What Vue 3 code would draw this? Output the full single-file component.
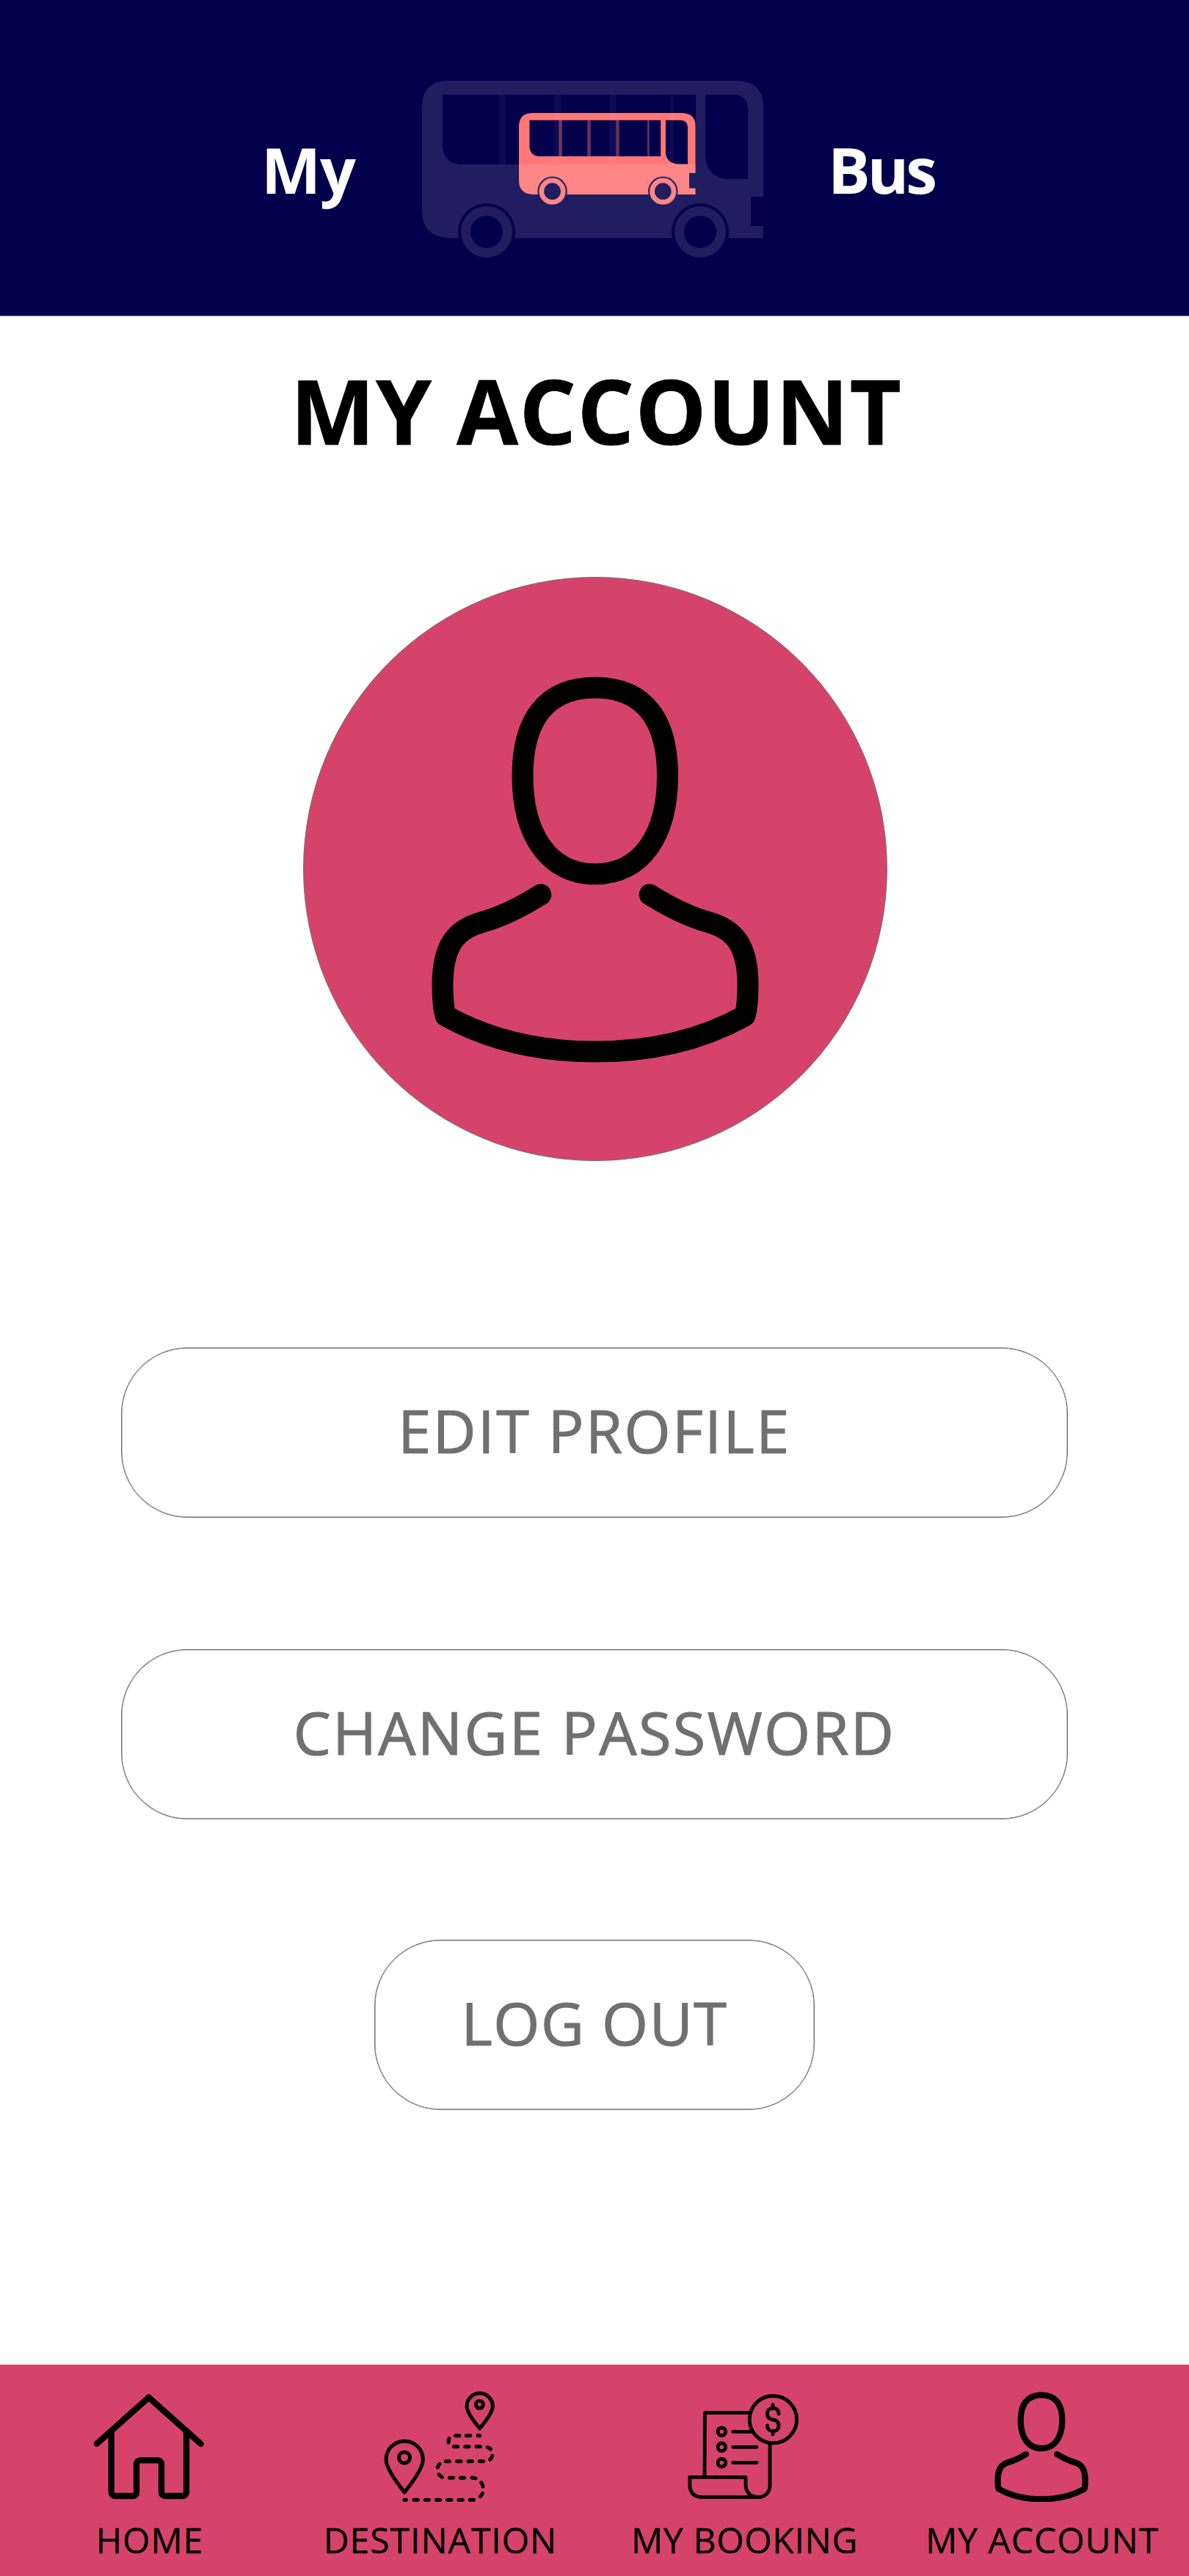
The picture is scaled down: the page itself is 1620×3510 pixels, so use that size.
<script setup>
const actions = [
  { label: 'EDIT PROFILE', cls: 'edit' },
  { label: 'CHANGE PASSWORD', cls: 'change' },
  { label: 'LOG OUT', cls: 'logout' },
]

const personHead =
  'M810 937C880 937 908.5 985 908.5 1057C908.5 1135 875 1191 810 1191C745 1191 711 1135 711 1057C711 985 740 937 810 937Z'
const personBody =
  'M735.8 1219C712 1234 686 1248 656 1256.5C622 1266 602 1286 602 1342C602 1362 603 1373 606 1384C665 1417 735 1433 810 1433C885 1433 955 1417 1014 1384C1017 1373 1018 1362 1018 1342C1018 1286 998 1266 964 1256.5C934 1248 908 1234 884.2 1219'

const routeDashes =
  'M393 621h7M432 621h16M478 621h16M523 621h16M569 621h16M615 621h16M661 621h16M703 607Q710 602 712 594M707 550Q713 557 714 566M669 530Q677 530 684 533M622 531h16M577 531h16M534 517Q540 524 547 528M529 488Q531 480 537 474M562 463h16M608 463h16M654 463h16M700 463h16M743 456Q750 450 752 441M733 406Q741 408 746 414M687 403h16M641 403h16M595 403h16M573 386Q573 376 576 370M602 358h16M646 358h16M693 358h8'
</script>

<template>
  <div class="screen">
    <header class="header">
      <span class="brand">My</span>
      <svg class="buses" viewBox="0 0 465 245">
        <defs>
          <mask id="wheel-gaps" maskUnits="userSpaceOnUse" x="0" y="0" width="465" height="245">
            <rect width="465" height="245" fill="#fff" />
            <circle cx="88" cy="206" r="39" fill="#000" />
            <circle cx="379" cy="206" r="39" fill="#000" />
          </mask>
          <g id="bus">
            <path
              mask="url(#wheel-gaps)"
              fill-rule="evenodd"
              d="M36 0H427Q465 0 465 36V158H448V198H465V214.5H36Q0 212 0 178V36Q0 0 36 0ZM28 19V90Q30 114 56 114H373V19ZM386 19V104Q388 131 416 134H444V40Q444 19 424 19Z"
            />
            <path
              fill-opacity=".4"
              d="M105 19h9v95h-9zM180 19h9v95h-9zM255 19h9v95h-9zM338 19h5v95h-5z"
            />
            <g fill="none" stroke-width="13">
              <circle cx="88" cy="206" r="28.5" />
              <circle cx="379" cy="206" r="28.5" />
            </g>
          </g>
        </defs>
        <use href="#bus" transform="translate(132 44) scale(.518)" fill="#ff7777" stroke="#ff7777" stroke-width="0" />
        <g opacity=".115">
          <use href="#bus" fill="#fff" stroke="#fff" stroke-width="0" />
        </g>
      </svg>
      <span class="brand brand-end">Bus</span>
    </header>

    <main class="content">
      <h1 class="title">MY ACCOUNT</h1>
      <div class="avatar">
        <svg viewBox="587 922 446 526" width="446" height="526" class="line" stroke-width="29">
          <path :d="personHead" />
          <path :d="personBody" />
        </svg>
      </div>
      <button v-for="a in actions" :key="a.label" class="action" :class="a.cls">{{ a.label }}</button>
    </main>

    <nav class="nav">
      <a class="item home">
        <span class="icon">
          <svg viewBox="380 188 455 432" width="151.7" height="144" class="line" stroke-width="25">
            <path d="M395 391L607 202L820 392" />
            <path
              d="M454 340V588Q454 605 471 605H541Q557 605 557 589V475Q557 459 573 459H642Q659 459 659 475V589Q659 605 675 605H743Q761 605 761 586V340"
            />
          </svg>
        </span>
        <span class="label">HOME</span>
      </a>
      <a class="item destination">
        <span class="icon">
          <svg viewBox="309 176 454 454" width="151.3" height="151.3" class="line" stroke-width="15">
            <path d="M701 329C690 315 648 266 648 238A53 53 0 0 1 754 238C754 266 712 315 701 329Z" />
            <circle cx="700.5" cy="231" r="15" />
            <path d="M393.5 590C378 570 318 498 318 456A75.5 75.5 0 0 1 469 456C469 498 409 570 393.5 590Z" />
            <circle cx="393" cy="448" r="22.5" />
            <path :d="routeDashes" />
          </svg>
        </span>
        <span class="label">DESTINATION</span>
      </a>
      <a class="item booking">
        <span class="icon">
          <svg viewBox="350 188 455 431" width="151.7" height="143.7" class="line" stroke-width="14.5">
            <circle cx="699" cy="292" r="96.5" />
            <path d="M605 265H420.500L419 521" />
            <path d="M686 392V562A47 48 0 0 1 639 610H407Q358.500 606 358.500 560V528H587V562Q590 605 635 610" />
            <circle cx="489" cy="342" r="16" />
            <circle cx="489" cy="405" r="16" />
            <circle cx="489" cy="469" r="16" />
            <path d="M535 342H612M535 405H632M535 469H632" />
            <path
              d="M698 232v12M698 342v11M722 269C722 253 711 246 698 246C684 246 675 256 675 269C675 285 687 291 698 293C713 295 722 303 722 317C722 332 711 340 698 340C685 340 675 331 675 317"
            />
          </svg>
        </span>
        <span class="label">MY BOOKING</span>
      </a>
      <a class="item account">
        <span class="icon">
          <svg viewBox="587 922 446 526" width="128" height="150.7" class="line" stroke-width="29">
            <path :d="personHead" />
            <path :d="personBody" />
          </svg>
        </span>
        <span class="label">MY ACCOUNT</span>
      </a>
    </nav>
  </div>
</template>

<style>
body {
  margin: 0;
  background: #fff;
}
</style>

<style scoped>
.screen {
  width: 1620px;
  height: 3510px;
  display: flex;
  flex-direction: column;
  font-family: 'Open Sans', 'Noto Sans', sans-serif;
  background: #fff;
}

.line {
  display: block;
  fill: none;
  stroke: #000;
  stroke-linecap: round;
  stroke-linejoin: round;
}

.header {
  box-sizing: border-box;
  height: 430px;
  flex: none;
  display: grid;
  grid-template-columns: 219px 465px auto;
  align-items: start;
  padding: 110px 0 0 356px;
  background: #03004b;
  box-shadow: 0 1px 0 #8280a5;
}
.brand {
  margin-top: 78px;
  font-size: 86px;
  line-height: 86px;
  font-weight: 700;
  letter-spacing: -1px;
  color: #fff;
}
.brand-end {
  margin-left: 88px;
  letter-spacing: -4px;
}
.buses {
  display: block;
  width: 465px;
  height: 245px;
}

.content {
  flex: 1;
  display: flex;
  flex-direction: column;
  align-items: center;
}
.title {
  margin: 68px 0 0;
  padding-left: 5px;
  font-size: 122px;
  line-height: 122px;
  font-weight: 700;
  letter-spacing: 1.2px;
  color: #000;
  -webkit-text-stroke: 0.6px #000;
  white-space: nowrap;
}
.avatar {
  box-sizing: border-box;
  width: 796px;
  height: 796px;
  margin: 166px 0 75px 2px;
  padding-top: 135px;
  display: flex;
  justify-content: center;
  align-items: flex-start;
  border: 1px solid #707070;
  border-radius: 50%;
  background: #d6436a;
}
.action {
  box-sizing: border-box;
  width: 1290px;
  height: 232px;
  margin: 179px 0 0;
  padding: 0 0 8px;
  border: 1px solid #707070;
  border-radius: 90px;
  box-shadow: inset 0 0 0 0.5px #707070;
  background: #fff;
  font: 400 81px/81px 'Open Sans', 'Noto Sans', sans-serif;
  letter-spacing: 2.5px;
  color: #707070;
  -webkit-text-stroke: 1.2px #707070;
}
.logout {
  width: 600px;
  margin-top: 164px;
  letter-spacing: 1.6px;
}

.nav {
  flex: none;
  height: 288px;
  display: grid;
  grid-template-columns: 408px 384px 443px 370px;
  background: #d6436a;
}
.item {
  display: flex;
  flex-direction: column;
  align-items: center;
  padding-top: 36px;
}
.icon {
  height: 152px;
  display: flex;
  align-items: center;
  margin-right: 2px;
}
.label {
  margin-top: 27px;
  font-size: 48px;
  line-height: 48px;
  letter-spacing: 1px;
  color: #000;
  -webkit-text-stroke: 0.4px #000;
  white-space: nowrap;
}
.booking .label {
  padding-left: 2px;
  letter-spacing: 0.7px;
}
</style>
